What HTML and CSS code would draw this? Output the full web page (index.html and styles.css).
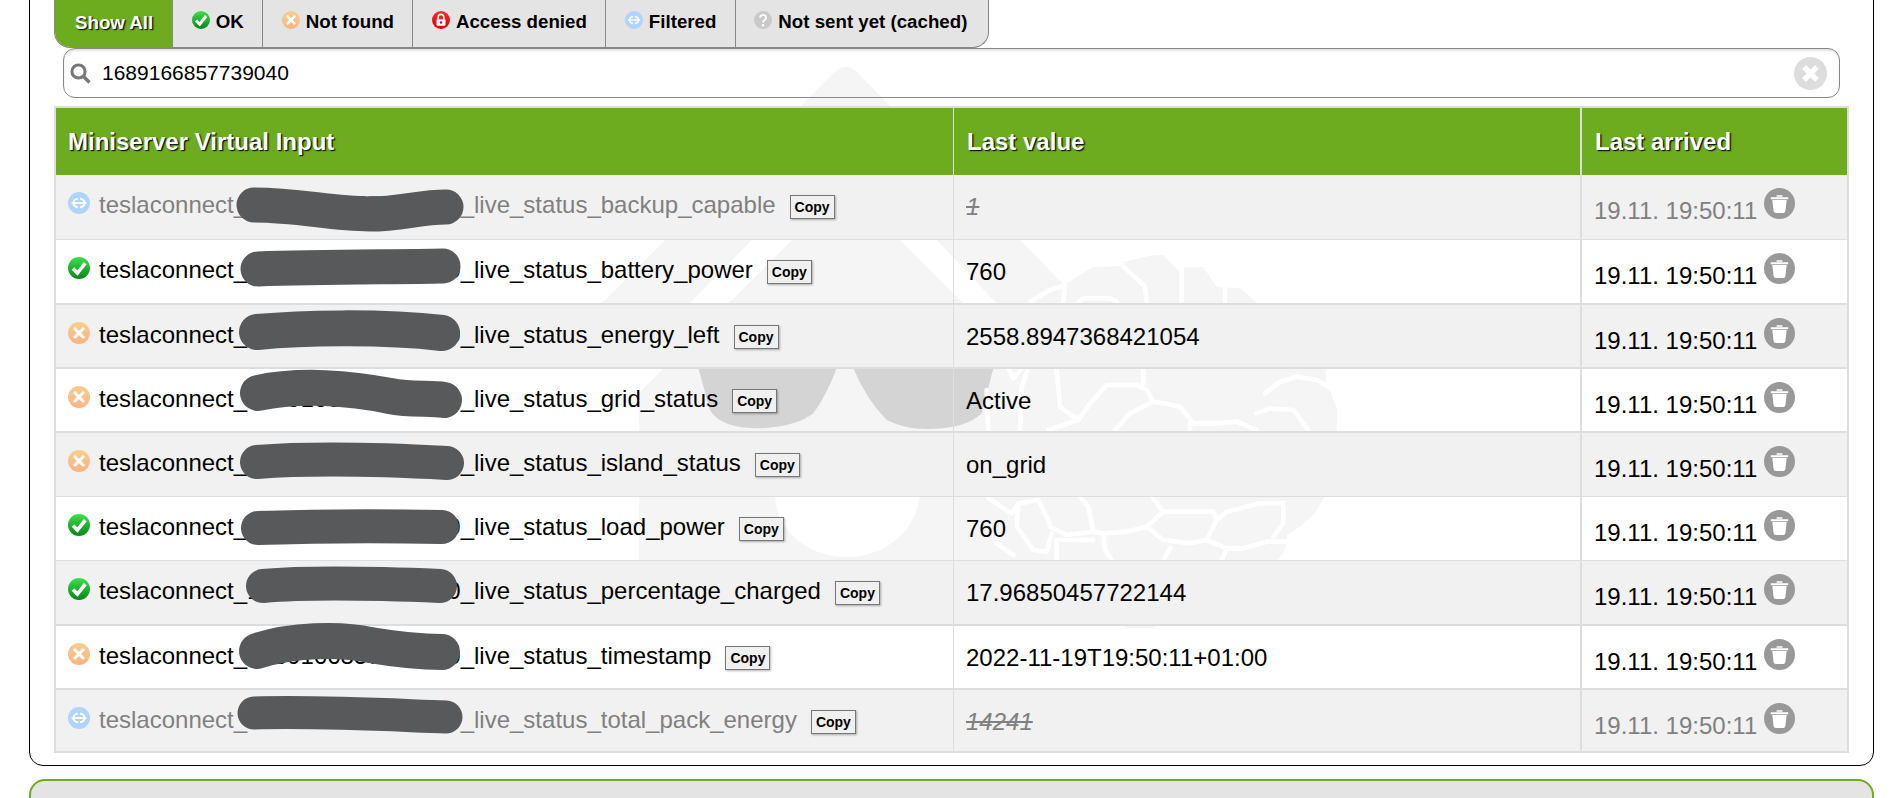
FILE: index.html
```html
<!DOCTYPE html>
<html lang="en">
<head>
<meta charset="utf-8">
<title>Miniserver Virtual Inputs</title>
<link rel="stylesheet" href="styles.css">
</head>
<body>
<svg class="defs" width="0" height="0" aria-hidden="true">
  <defs>
    <linearGradient id="gOk" x1="0" y1="0" x2="0" y2="1"><stop offset="0" stop-color="#3fe04a"/><stop offset="1" stop-color="#07851a"/></linearGradient>
    <linearGradient id="gNf" x1="0" y1="0" x2="0" y2="1"><stop offset="0" stop-color="#f4d08f"/><stop offset="1" stop-color="#ffb184"/></linearGradient>
    <linearGradient id="gDn" x1="0" y1="0" x2="0" y2="1"><stop offset="0" stop-color="#ff2a2a"/><stop offset="1" stop-color="#d8000c"/></linearGradient>
    <symbol id="i-ok" viewBox="0 0 22 22"><circle cx="11" cy="11" r="11" fill="url(#gOk)"/><path d="M5 11.5l4.4 4.6 7.8-10" fill="none" stroke="#fff" stroke-width="3.6"/></symbol>
    <symbol id="i-nf" viewBox="0 0 22 22"><circle cx="11" cy="11" r="11" fill="url(#gNf)"/><path d="M6 6l10 10M16 6L6 16" fill="none" stroke="#fff" stroke-width="3"/></symbol>
    <symbol id="i-dn" viewBox="0 0 22 22"><circle cx="11" cy="11" r="11" fill="url(#gDn)"/><path d="M7.5 10V7.6a3.5 3.5 0 0 1 7 0V10" fill="none" stroke="#fff" stroke-width="2"/><rect x="5.5" y="10" width="11" height="8" rx="1" fill="#fff"/><circle cx="11" cy="14" r="1.5" fill="#d8000c"/></symbol>
    <symbol id="i-fi" viewBox="0 0 22 22"><circle cx="11" cy="11" r="11" fill="#aed4ff"/><path d="M10 6.8a4.6 4.2 0 0 0 0 8.4M12 6.8a4.6 4.2 0 0 1 0 8.4" fill="none" stroke="#fff" stroke-width="2"/><path d="M3.5 11h15" stroke="#fff" stroke-width="1.8"/></symbol>
    <symbol id="i-qu" viewBox="0 0 22 22"><circle cx="11" cy="11" r="11" fill="#c9c9c9"/><path d="M7.5 8.2a3.6 3.4 0 1 1 5.6 2.8c-1.4 1-2.1 1.6-2.1 3.2" fill="none" stroke="#fff" stroke-width="2.4"/><circle cx="11" cy="17.4" r="1.5" fill="#fff"/></symbol>
    <symbol id="i-tr" viewBox="0 0 32 32"><circle cx="16" cy="16" r="16" fill="#999"/><path d="M7 9.5h18v2H7zM13 7.4h6v1.6h-6zM8.6 12.5h14.8l-1.3 11.2a2.4 2.4 0 0 1-2.4 2.1h-7.4a2.4 2.4 0 0 1-2.4-2.1z" fill="#fff"/></symbol>
  </defs>
</svg>

<div class="page">
  <svg class="watermark" viewBox="0 0 1894 798" aria-hidden="true">
    <path class="wm" d="M835 72Q845 62 857 72L1063 284L1090 310H1003L846 144L690 303H602z"/>
    <path class="wm" d="M846 186L1053 393V560H639V393z"/>
    <path class="wm" d="M1030 303L1050 289L1066 284L1093 267L1120 266L1123 262L1153 255L1163 255L1180 272L1183 267L1203 267L1217 287L1240 288L1257 303L1300 340L1328 367L1328 385L1337 410L1337 431L1325 496L1315 513L1300 527L1287 535L1285 550L1278 560L1152 628L1128 628L1017 560L987 496L985 431L993 367z"/>
    <path class="wm-cut" d="M775 497C778 535 812 557 847 557C885 557 917 530 919 497z"/>
    <g transform="translate(620 230) scale(.33333)">
      <path class="wm-glass" d="M235 415L270 540Q300 595 420 595Q530 590 580 550Q620 495 650 415z"/>
      <path class="wm-glass" d="M700 415Q740 510 800 570Q860 600 930 597Q1040 595 1085 550L1120 415z"/>
    </g>
    <g class="veins" transform="translate(950 230) scale(.33333)">
      <path d="M340 215L345 165L300 180L240 215M385 215L400 205H480L500 215M590 215L585 170L510 100M695 215V110M825 215V170"/>
      <path d="M175 415L190 445L215 415M110 480L115 600M235 415L215 470L210 600M320 420L330 530L385 570L295 600M385 570L420 520L470 465H560L590 480L610 515L640 520L690 530L730 580H800L860 575L920 600M610 515L540 550L495 600M720 580V600M945 490L990 455L1040 440L1100 450L1135 470M920 550L960 535L1030 540L1075 600M580 415V460M1135 415V470"/>
    </g>
    <g class="veins" transform="translate(950 490) scale(.33333)">
      <path d="M115 25L185 70L205 40L265 30L295 90L300 110L350 135L430 125M205 40L200 110L250 180L290 185L305 130M140 160L190 195M430 125L460 130L530 125L590 110L640 150L720 160L770 150L830 175L880 175L950 155L1010 155M320 150H430M320 150V210M390 20L415 50L430 125M590 110L640 65H790L800 90L770 150M610 25L640 65M800 90L830 65L930 40H1000V100L970 140M460 130L465 180L485 210M660 175L640 210M830 175L815 210"/>
    </g>
  </svg>

  <section class="panel">
    <nav class="tabs">
      <a class="tab tab-active">Show All</a>
      <a class="tab tab-ok"><svg class="tab-icon"><use href="#i-ok"/></svg>OK</a>
      <a class="tab tab-nf"><svg class="tab-icon"><use href="#i-nf"/></svg>Not found</a>
      <a class="tab tab-dn"><svg class="tab-icon"><use href="#i-dn"/></svg>Access denied</a>
      <a class="tab tab-fi"><svg class="tab-icon"><use href="#i-fi"/></svg>Filtered</a>
      <a class="tab tab-qu"><svg class="tab-icon"><use href="#i-qu"/></svg>Not sent yet (cached)</a>
    </nav>

    <div class="search">
      <svg class="search-icon" viewBox="0 0 21 21" aria-hidden="true"><circle cx="8.5" cy="8.5" r="6.6" fill="none" stroke="#777" stroke-width="3"/><path d="M13.5 13.5l6 6" stroke="#777" stroke-width="3.4"/></svg>
      <input class="search-input" type="text" value="1689166857739040">
      <svg class="search-clear" viewBox="0 0 33 33" aria-hidden="true"><circle cx="16.5" cy="16.5" r="16.5" fill="#ddd"/><path d="M10 10l13 13M23 10L10 23" stroke="#fff" stroke-width="5.4"/></svg>
    </div>

    <table class="grid">
      <colgroup><col class="col-name"><col class="col-value"><col class="col-time"></colgroup>
      <thead>
        <tr><th>Miniserver Virtual Input</th><th>Last value</th><th>Last arrived</th></tr>
      </thead>
      <tbody>
        <tr class="muted thin tall"><td><div class="name"><svg class="status"><use href="#i-fi"/></svg><span>teslaconnect_1689166857739040_live_status_backup_capable</span><button class="copy">Copy</button></div></td><td class="value"><s>1</s></td><td><div class="time"><span>19.11. 19:50:11</span><svg class="trash"><use href="#i-tr"/></svg></div></td></tr>
        <tr class="tall"><td><div class="name"><svg class="status"><use href="#i-ok"/></svg><span>teslaconnect_1689166857739040_live_status_battery_power</span><button class="copy">Copy</button></div></td><td class="value">760</td><td><div class="time"><span>19.11. 19:50:11</span><svg class="trash"><use href="#i-tr"/></svg></div></td></tr>
        <tr><td><div class="name"><svg class="status"><use href="#i-nf"/></svg><span>teslaconnect_1689166857739040_live_status_energy_left</span><button class="copy">Copy</button></div></td><td class="value">2558.8947368421054</td><td><div class="time"><span>19.11. 19:50:11</span><svg class="trash"><use href="#i-tr"/></svg></div></td></tr>
        <tr><td><div class="name"><svg class="status"><use href="#i-nf"/></svg><span>teslaconnect_1689166857739040_live_status_grid_status</span><button class="copy">Copy</button></div></td><td class="value">Active</td><td><div class="time"><span>19.11. 19:50:11</span><svg class="trash"><use href="#i-tr"/></svg></div></td></tr>
        <tr class="thin"><td><div class="name"><svg class="status"><use href="#i-nf"/></svg><span>teslaconnect_1689166857739040_live_status_island_status</span><button class="copy">Copy</button></div></td><td class="value">on_grid</td><td><div class="time"><span>19.11. 19:50:11</span><svg class="trash"><use href="#i-tr"/></svg></div></td></tr>
        <tr class="thin"><td><div class="name"><svg class="status"><use href="#i-ok"/></svg><span>teslaconnect_1689166857739040_live_status_load_power</span><button class="copy">Copy</button></div></td><td class="value">760</td><td><div class="time"><span>19.11. 19:50:11</span><svg class="trash"><use href="#i-tr"/></svg></div></td></tr>
        <tr class="tall"><td><div class="name"><svg class="status"><use href="#i-ok"/></svg><span>teslaconnect_1689166857739040_live_status_percentage_charged</span><button class="copy">Copy</button></div></td><td class="value">17.96850457722144</td><td><div class="time"><span>19.11. 19:50:11</span><svg class="trash"><use href="#i-tr"/></svg></div></td></tr>
        <tr><td><div class="name"><svg class="status"><use href="#i-nf"/></svg><span>teslaconnect_1689166857739040_live_status_timestamp</span><button class="copy">Copy</button></div></td><td class="value">2022-11-19T19:50:11+01:00</td><td><div class="time"><span>19.11. 19:50:11</span><svg class="trash"><use href="#i-tr"/></svg></div></td></tr>
        <tr class="muted last"><td><div class="name"><svg class="status"><use href="#i-fi"/></svg><span>teslaconnect_1689166857739040_live_status_total_pack_energy</span><button class="copy">Copy</button></div></td><td class="value"><s>14241</s></td><td><div class="time"><span>19.11. 19:50:11</span><svg class="trash"><use href="#i-tr"/></svg></div></td></tr>
      </tbody>
    </table>
  </section>

  <section class="panel-next"></section>

  <svg class="redactions" viewBox="0 0 1894 798" aria-hidden="true">
    <path d="M254 205C300 205 330 214 370 214C400 214 420 207 446 207" stroke-width="35"/>
    <path d="M258 269C320 267 390 267 443 266" stroke-width="35"/>
    <path d="M257 332C300 328 380 326 442 333" stroke-width="36"/>
    <path d="M258 393C300 384 350 388 390 396C410 400 430 398 444 400" stroke-width="36"/>
    <path d="M257 462C310 458 390 460 447 463" stroke-width="34"/>
    <path d="M258 528C320 526 390 526 442 527" stroke-width="34"/>
    <path d="M263 586C310 582 390 584 440 586" stroke-width="34"/>
    <path d="M257 651C290 640 340 638 370 645C400 650 425 652 442 652" stroke-width="36"/>
    <path d="M254 713C320 711 390 715 446 717" stroke-width="33"/>
  </svg>
</div>
</body>
</html>
```
FILE: styles.css
```css
html, body {
  margin: 0;
  height: 798px;
  overflow: hidden;
  background: #fff;
}

body {
  font-family: "Liberation Sans", Arial, sans-serif;
  font-size: 24px;
  color: #000;
}

.defs {
  position: absolute;
}

.page {
  position: relative;
  height: 798px;
  padding: 0 20px 0 29px;
  box-sizing: border-box;
  overflow: hidden;
}

.watermark,
.redactions {
  position: absolute;
  left: 0;
  top: 0;
  width: 1894px;
  height: 798px;
}

.wm { fill: #f5f5f5; }
.wm-cut { fill: #fff; }
.wm-glass { fill: #d4d4d4; }
.veins path {
  fill: none;
  stroke: #fff;
  stroke-width: 14;
  stroke-linejoin: round;
  stroke-linecap: round;
}

.redactions { pointer-events: none; }
.redactions path {
  fill: none;
  stroke: #58595b;
  stroke-linecap: round;
  stroke-linejoin: round;
}

/* panels */
.panel {
  position: relative;
  margin-top: -30px;
  height: 796px;
  box-sizing: border-box;
  padding: 30px 23px 0 24px;
  border: 1px solid #000;
  border-radius: 14px;
}

.panel-next {
  position: relative;
  margin-top: 13px;
  height: 60px;
  box-sizing: border-box;
  border: 2px solid #6dab1f;
  border-radius: 16px;
  background: #e4e4e4;
}

/* tabs */
.tabs {
  display: flex;
  width: max-content;
  height: 48px;
  box-sizing: border-box;
  margin-top: -1px;
  border: 1px solid #888;
  border-top: 0;
  border-radius: 0 0 16px 16px;
  background: #e4e4e4;
  overflow: hidden;
  font-size: 18.7px;
  font-weight: 700;
}

.tab {
  display: flex;
  align-items: center;
  gap: 6px;
  padding: 0 18.5px 3px;
  border-right: 1px solid #888;
  white-space: nowrap;
}

.tab:last-child { border-right: 0; padding-right: 21px; }

.tab-active {
  margin: 0 0 -1px -1px;
  padding: 0 19px 3px 21px;
  background: #6dab1f;
  color: #fff;
  text-shadow: 1.25px 1.25px 1.25px #000;
}

.tab-icon {
  width: 18px;
  height: 18px;
  margin-top: -4px;
}

/* search */
.search {
  display: flex;
  align-items: center;
  height: 50px;
  box-sizing: border-box;
  margin: 0 10px 8px 9px;
  padding: 0 12px 0 6px;
  border: 1px solid #888;
  border-radius: 12px;
  box-shadow: inset 0 2px 2px rgba(0, 0, 0, .12);
}

.search-icon { width: 21px; height: 21px; flex: none; }
.search-clear { width: 33px; height: 33px; flex: none; }

.search-input {
  flex: 1;
  min-width: 0;
  margin-left: 11px;
  padding: 0;
  border: 0;
  outline: 0;
  background: transparent;
  font: 21px "Liberation Sans", Arial, sans-serif;
  color: #000;
}

/* table */
.grid {
  width: 1795px;
  table-layout: fixed;
  border-collapse: separate;
  border-spacing: 0;
  border: 2px solid #ddd;
}

.col-name { width: 897px; }
.col-value { width: 627px; }
.col-time { width: 267px; }

.grid th {
  height: 67px;
  box-sizing: border-box;
  padding: 0 0 0 12px;
  background: #6dab1f;
  color: #fff;
  font-size: 24px;
  font-weight: 700;
  text-align: left;
  text-shadow: 1.25px 1.25px 1.25px #000;
}

.grid th + th { border-left: 1px solid #ddd; padding-left: 13px; }
.grid th:last-child { border-left-width: 2px; }

.grid td {
  height: 64px;
  box-sizing: border-box;
  padding: 0;
  vertical-align: top;
  border-bottom: 2px solid #ddd;
}

.grid td + td { border-left: 1px solid #ddd; }
.grid td:last-child { border-left-width: 2px; }

.grid tbody tr.tall td { height: 65px; }
.grid tbody tr.thin td { border-bottom-width: 1px; }
.grid tbody tr.last td { height: 61px; border-bottom: 0; }
.grid tbody tr:nth-child(odd) td { background: #f1f1f1; }

.muted { color: #808080; }

.name {
  display: flex;
  align-items: flex-start;
  padding: 16px 0 0 12px;
  white-space: nowrap;
}

.status {
  flex: none;
  width: 22px;
  height: 22px;
  margin: 1px 9px 0 0;
}

.copy {
  flex: none;
  width: 45px;
  height: 24px;
  margin: 4px 0 0 14px;
  padding: 0;
  border: 1px solid #777;
  background: #f0f0f0;
  box-shadow: 1px 1px 2px rgba(0, 0, 0, .3);
  font: 700 14px "Liberation Sans", Arial, sans-serif;
  color: #000;
}

.value { padding: 18px 0 0 12px !important; }
.muted .value { font-style: italic; }

.time {
  display: flex;
  align-items: flex-start;
  padding: 13px 0 0 12px;
  white-space: nowrap;
}

.time span { margin-top: 9px; margin-right: 7px; }

.trash {
  flex: none;
  width: 31px;
  height: 31px;
}
```
